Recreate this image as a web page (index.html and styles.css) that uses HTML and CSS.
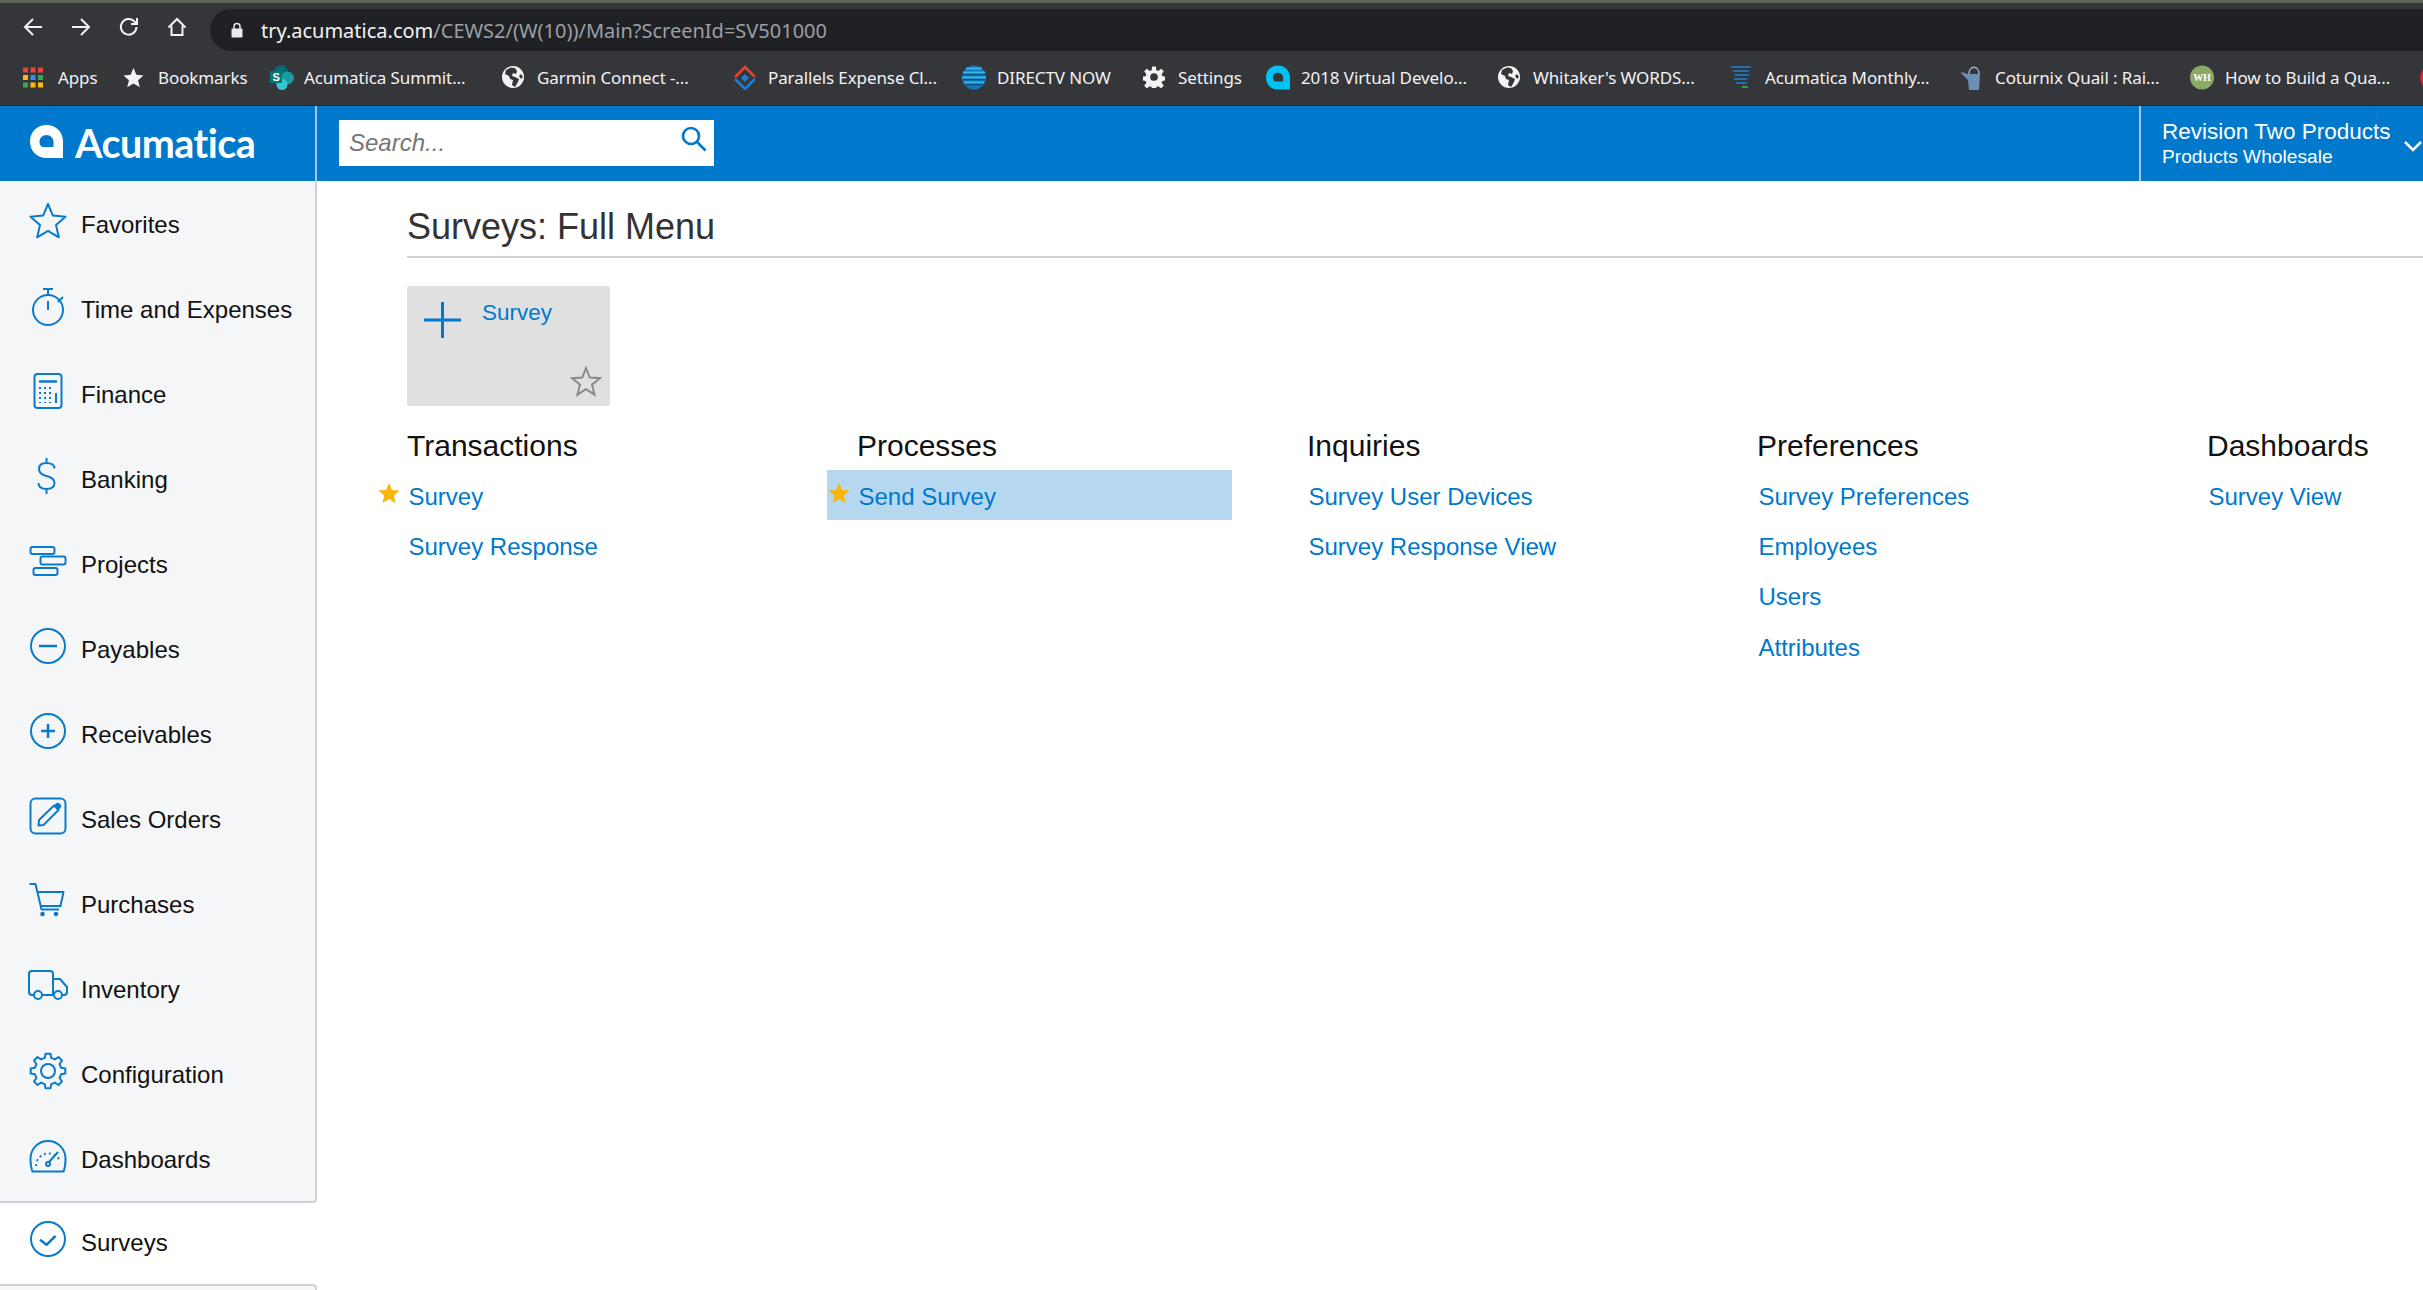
FILE: index.html
```html
<!DOCTYPE html>
<html lang="en">
<head>
<meta charset="utf-8">
<title>Surveys: Full Menu</title>
<link rel="stylesheet" href="styles.css">
</head>
<body>
<div class="window-strip"></div>
<div class="toolbar">
  <div class="nav-buttons">
    <svg class="tool" viewBox="0 0 20 20"><path d="M19 10H2M10 2l-8 8 8 8"/></svg>
    <svg class="tool" viewBox="0 0 20 20"><path d="M1 10h17M10 2l8 8-8 8"/></svg>
    <svg class="tool" viewBox="0 0 20 20"><path d="M17.500 10a7.800 7.800 0 1 1-2.400-5.800L18 7M18 1v6h-6"/></svg>
    <svg class="tool" viewBox="0 0 20 20"><path d="M1.500 10.500 10 2l8.500 8.500M4.500 9v9h11V9"/></svg>
  </div>
  <div class="omnibox">
    <svg class="lock" viewBox="0 0 12 16"><path d="M3 7V4.500a3 3 0 0 1 6 0V7" class="lock-bow"/><rect x="0.500" y="6.500" width="11" height="9" rx="1"/></svg>
    <span class="url"><span class="url-host">try.acumatica.com</span>/CEWS2/(W(10))/Main?ScreenId=SV501000</span>
  </div>
</div>
<div class="bookmarks">
  <div class="bm"><span class="bm-icon"><svg viewBox="0 0 20 20" width="20" height="21"><rect width="5" height="5" fill="#e8453c"/><rect x="7.500" width="5" height="5" fill="#e8453c"/><rect x="15" width="5" height="5" fill="#e8453c"/><rect y="7.500" width="5" height="5" fill="#fbbc05"/><rect x="7.500" y="7.500" width="5" height="5" fill="#4285f4"/><rect x="15" y="7.500" width="5" height="5" fill="#34a853"/><rect y="15" width="5" height="5" fill="#34a853"/><rect x="7.500" y="15" width="5" height="5" fill="#fbbc05"/><rect x="15" y="15" width="5" height="5" fill="#fbbc05"/></svg></span>Apps</div>
  <div class="bm"><span class="bm-icon"><svg viewBox="0 0 22 22" width="21" height="21"><path fill="#f1f3f4" d="m11 1 3 7.200 7.500.6-5.700 5 1.800 7.500L11 17.300l-6.600 4 1.800-7.500-5.700-5L8 8.200z"/></svg></span>Bookmarks</div>
  <div class="bm"><span class="bm-icon"><svg viewBox="0 0 25 25" width="25" height="25"><circle cx="12" cy="7" r="7" fill="#036c70"/><circle cx="18.500" cy="13" r="6.500" fill="#1a9ba1"/><circle cx="13" cy="19.500" r="5.500" fill="#37c6d0"/><rect x="1" y="6" width="12" height="12" rx="1" fill="#03787c"/><text x="7" y="15.500" class="sp-s">S</text></svg></span>Acumatica Summit...</div>
  <div class="bm"><span class="bm-icon"><svg viewBox="0 0 22 22" width="22" height="22"><circle cx="11" cy="11" r="11" fill="#f1f3f4"/><path fill="#35363a" d="M9 1.500 4 4 3 8l4 2 1 3 3 1-1 5 3 2 3-5 1-3-4-2-3-1 1-3 3 1 1-3-2-3zM19 8l-2 2 2 3 2-2z"/></svg></span>Garmin Connect -...</div>
  <div class="bm"><span class="bm-icon"><svg viewBox="0 0 24 25" width="24" height="25"><path fill="none" stroke="#e8432e" stroke-width="2.500" d="M2 12 12 2l10 10"/><path fill="none" stroke="#1c7ed6" stroke-width="2.500" d="m2 14 10 10 10-10"/><path fill="#1c7ed6" d="m12 9 4 4-4 4-4-4z"/></svg></span>Parallels Expense Cl...</div>
  <div class="bm"><span class="bm-icon"><svg viewBox="0 0 24 24" width="24" height="25"><circle cx="12" cy="12" r="12" fill="#1378b8"/><path stroke="#0a4f80" stroke-width="1.500" d="M0 9h24M1 14h22M3 19h18"/><path stroke="#35b3ee" stroke-width="1.800" d="M4 3h16M1 7h22M0 12h24M2 17h20"/></svg></span>DIRECTV NOW</div>
  <div class="bm"><span class="bm-icon"><svg viewBox="0 0 40 40" width="22" height="22"><path fill="#f1f3f4" fill-rule="evenodd" d="M16.700 1h6.600l1 6.500 3.300 1.400 5.500-3.900 4.700 4.700-3.900 5.500 1.400 3.300 6.500 1v6.600l-6.500 1-1.400 3.300 3.900 5.500-4.700 4.700-5.500-3.900-3.300 1.400-1 6.500h-6.600l-1-6.500-3.300-1.400-5.500 3.900-4.700-4.700 3.900-5.500-1.400-3.300-6.500-1v-6.600l6.500-1 1.400-3.300-3.900-5.500 4.700-4.700 5.500 3.900 3.300-1.400zM20 13a7 7 0 1 0 0 14 7 7 0 0 0 0-14z"/></svg></span>Settings</div>
  <div class="bm"><span class="bm-icon"><svg viewBox="0 0 33 33" width="24" height="25"><path fill="#00c2f3" fill-rule="evenodd" d="M16.500 0C26 0 33 7 33 16.500V33H16.500C7 33 0 26 0 16.500S7 0 16.500 0zm0 10c-4 0-7 3-7 7 0 3 2 5 4 5h10v-5c0-4-3-7-7-7z"/></svg></span>2018 Virtual Develo...</div>
  <div class="bm"><span class="bm-icon"><svg viewBox="0 0 22 22" width="22" height="22"><circle cx="11" cy="11" r="11" fill="#f1f3f4"/><path fill="#35363a" d="M9 1.500 4 4 3 8l4 2 1 3 3 1-1 5 3 2 3-5 1-3-4-2-3-1 1-3 3 1 1-3-2-3zM19 8l-2 2 2 3 2-2z"/></svg></span>Whitaker's WORDS...</div>
  <div class="bm"><span class="bm-icon"><svg viewBox="0 0 21 24" width="21" height="24"><path stroke="#1f6fb2" stroke-width="2" d="M1 2h20M3 6h16M5 10h14M4 14h13M6 18h11"/><path stroke="#2f9e44" stroke-width="2" d="M12 22h6"/></svg></span>Acumatica Monthly...</div>
  <div class="bm"><span class="bm-icon"><svg viewBox="0 0 22 25" width="22" height="25"><path fill="#6d8fb5" d="M7 9h13l-1 16H9L8 15 1 8l1-1z"/><path fill="none" stroke="#9db3c9" stroke-width="1.500" d="M9 9c0-9 10-9 10 0"/></svg></span>Coturnix Quail : Rai...</div>
  <div class="bm"><span class="bm-icon"><svg viewBox="0 0 24 24" width="24" height="25"><circle cx="12" cy="12" r="12" fill="#8bab64"/><text x="12" y="15.500" class="wh">WH</text></svg></span>How to Build a Qua...</div>
  <div class="bm bm-clipped"><span class="bm-icon"><svg viewBox="0 0 24 24" width="24" height="25"><circle cx="12" cy="12" r="12" fill="#d9233b"/></svg></span></div>
</div>
<header class="app-header">
  <div class="logo">
    <svg class="logo-mark" viewBox="0 0 33 33"><path fill="#fff" fill-rule="evenodd" d="M16.500 0C26 0 33 7 33 16.500V33H16.500C7 33 0 26 0 16.500S7 0 16.500 0zm0 10c-4 0-7 3-7 7 0 3 2 5 4 5h10v-5c0-4-3-7-7-7z"/></svg>
    <span class="logo-text">Acumatica</span>
  </div>
  <div class="search">
    <span class="search-text">Search...</span>
    <svg class="search-icon" viewBox="0 0 26 26"><circle cx="10" cy="10" r="8"/><path d="m15.500 15.500 9 9"/></svg>
  </div>
  <div class="company">
    <div class="company-name">Revision Two Products</div>
    <div class="company-sub">Products Wholesale</div>
    <svg class="chevron" viewBox="0 0 20 12"><path d="m2 2 8 8 8-8"/></svg>
  </div>
</header>
<div class="app-body">
  <nav class="sidebar">
    <div class="nav-group">
      <a class="nav-row"><svg class="nav-icon" viewBox="0 0 40 40"><path d="m20 3 4.900 11.600 12.600 1.100-9.500 8.300 2.800 12.300-10.800-6.500-10.800 6.500L12 24l-9.500-8.300 12.600-1.100z"/></svg>Favorites</a>
      <a class="nav-row"><svg class="nav-icon" viewBox="0 0 40 40"><circle cx="20" cy="24" r="15"/><path d="M15 3h10M20 3v6M20 15v9M30 16l5-5"/></svg>Time and Expenses</a>
      <a class="nav-row"><svg class="nav-icon" viewBox="0 0 40 40"><rect x="6.500" y="3" width="27" height="34" rx="3"/><path d="M11 10.500h18" stroke-width="2.500"/><path class="dots" d="M12 16v16M17 16v16M22 16v16"/><path d="M28 22v10"/></svg>Finance</a>
      <a class="nav-row"><svg class="nav-icon" viewBox="0 0 40 40"><path d="M26.500 12.500C26.500 9 23 7 18.500 7S11 9 11 13s3.500 6 7.500 7c4.500 1.100 8 3 8 7s-3.500 6-8 6-8-2-8-6M18.500 2v5M18.500 33v5"/></svg>Banking</a>
      <a class="nav-row"><svg class="nav-icon" viewBox="0 0 40 40"><rect x="2.500" y="6" width="24" height="7" rx="2"/><rect x="12.500" y="15.500" width="25" height="8" rx="2"/><rect x="5.500" y="27" width="24" height="7" rx="2"/></svg>Projects</a>
      <a class="nav-row"><svg class="nav-icon" viewBox="0 0 40 40"><circle cx="20" cy="20" r="17"/><path d="M11 20h18" stroke-width="2.500"/></svg>Payables</a>
      <a class="nav-row"><svg class="nav-icon" viewBox="0 0 40 40"><circle cx="20" cy="20" r="17"/><path d="M13 20h14M20 13v14" stroke-width="2.500"/></svg>Receivables</a>
      <a class="nav-row"><svg class="nav-icon" viewBox="0 0 40 40"><rect x="2.500" y="2.500" width="35" height="35" rx="5"/><path d="M10.500 29.500 11 24 26 9.500l4.500 4.500L15.500 29z"/><path class="solid" d="m26 9.500 2-2a2.500 2.500 0 0 1 3.500 0l1 1a2.500 2.500 0 0 1 0 3.500l-2 2z"/></svg>Sales Orders</a>
      <a class="nav-row"><svg class="nav-icon" viewBox="0 0 40 40"><path d="M1.500 3H7.500l6 25.500H31M9 11h26.500l-3 14H13"/><circle class="solid" cx="14.500" cy="33" r="2.300"/><circle class="solid" cx="28" cy="33" r="2.300"/></svg>Purchases</a>
      <a class="nav-row"><svg class="nav-icon" viewBox="0 0 40 40"><path d="M6 29H4a3 3 0 0 1-3-3V8a3 3 0 0 1 3-3h18a3 3 0 0 1 3 3v21M14 29h12M25 13h7l7 8v5a3 3 0 0 1-3 3h-2"/><circle cx="10" cy="29" r="4"/><circle cx="30" cy="29" r="4"/></svg>Inventory</a>
      <a class="nav-row"><svg class="nav-icon" viewBox="0 0 40 40"><path d="M16.730 6.900 17.560 2.670H22.440L23.270 6.900 26.950 8.430 30.530 6.020 33.980 9.470 31.570 13.050 33.100 16.730 37.330 17.560V22.440L33.100 23.270 31.570 26.950 33.980 30.530 30.530 33.980 26.950 31.570 23.270 33.100 22.440 37.330H17.560L16.730 33.100 13.050 31.570 9.470 33.980 6.020 30.530 8.430 26.950 6.900 23.270 2.670 22.440V17.560L6.900 16.730 8.430 13.050 6.020 9.470 9.470 6.020 13.050 8.430z"/><circle cx="20" cy="20" r="7"/></svg>Configuration</a>
      <a class="nav-row"><svg class="nav-icon" viewBox="0 0 40 40"><path d="M4.500 35.500C3 32 2.500 27 2.500 22.500a17.500 17.500 0 0 1 35 0c0 4.500-.5 9.500-2 13z"/><path d="M21 26 30 16"/><circle cx="20" cy="28" r="2"/><path class="dots" d="M8 30a12.500 12.500 0 0 1 24-5"/></svg>Dashboards</a>
    </div>
    <a class="nav-row nav-row-active"><svg class="nav-icon" viewBox="0 0 40 40"><circle cx="20" cy="20" r="17"/><path d="m12 20.800 6.500 5 9-9" stroke-width="2.500"/></svg>Surveys</a>
    <div class="nav-group nav-group-rest"></div>
  </nav>
  <main class="content">
    <h1 class="page-title">Surveys: Full Menu</h1>
    <div class="tile">
      <svg class="tile-plus" viewBox="0 0 37 36"><path d="M0 18h37M18.500 0v36"/></svg>
      <a class="tile-link">Survey</a>
      <svg class="tile-star" viewBox="0 0 32 31"><path d="m16 2 3.700 9.500 10.300.7-8 6.500 2.600 10-8.600-5.500-8.600 5.500 2.600-10-8-6.500 10.300-.7z"/></svg>
    </div>
    <div class="columns">
      <section class="column">
        <h2 class="column-title">Transactions</h2>
        <div class="item"><svg class="fav" viewBox="0 0 22 20"><path d="m11 0 3 7 7.500.6-5.700 4.900 1.800 7.500-6.600-4-6.600 4 1.800-7.500L.5 7.600 8 7z"/></svg><a>Survey</a></div>
        <div class="item"><a>Survey Response</a></div>
      </section>
      <section class="column">
        <h2 class="column-title">Processes</h2>
        <div class="item item-active"><svg class="fav" viewBox="0 0 22 20"><path d="m11 0 3 7 7.500.6-5.700 4.900 1.800 7.500-6.600-4-6.600 4 1.800-7.500L.5 7.600 8 7z"/></svg><a>Send Survey</a></div>
      </section>
      <section class="column">
        <h2 class="column-title">Inquiries</h2>
        <div class="item"><a>Survey User Devices</a></div>
        <div class="item"><a>Survey Response View</a></div>
      </section>
      <section class="column">
        <h2 class="column-title">Preferences</h2>
        <div class="item"><a>Survey Preferences</a></div>
        <div class="item"><a>Employees</a></div>
        <div class="item"><a>Users</a></div>
        <div class="item"><a>Attributes</a></div>
      </section>
      <section class="column">
        <h2 class="column-title">Dashboards</h2>
        <div class="item"><a>Survey View</a></div>
      </section>
    </div>
  </main>
</div>
</body>
</html>
```
FILE: styles.css
```css
* { box-sizing: border-box; }
html, body { height: 100%; }
body {
  margin: 0;
  display: flex;
  flex-direction: column;
  overflow: hidden;
  background: #fff;
  font-family: "Liberation Sans", Arial, sans-serif;
}
.window-strip { height: 3px; flex: none; background: #5b6456; }
.toolbar {
  flex: none;
  height: 48px;
  padding-top: 6px;
  display: flex;
  background: #35363a;
}
.nav-buttons {
  width: 210px;
  padding: 5px 0 0 23px;
  display: flex;
  gap: 28px;
}
.tool {
  width: 20px;
  height: 20px;
  margin-top: 3px;
  fill: none;
  stroke: #f1f3f4;
  stroke-width: 2;
}
.omnibox {
  flex: 1;
  height: 42px;
  padding-left: 21px;
  display: flex;
  align-items: center;
  background: #202124;
  border-radius: 21px 0 0 21px;
}
.lock { width: 12px; height: 16px; fill: #e8eaed; }
.lock-bow { fill: none; stroke: #e8eaed; stroke-width: 1.5; }
.url {
  margin-left: 18px;
  color: #9aa0a6;
  font: 20px "Noto Sans", sans-serif;
  white-space: nowrap;
}
.url-host { color: #f1f3f4; }
.bookmarks {
  flex: none;
  height: 55px;
  padding: 0 0 2px 23px;
  display: grid;
  grid-template-columns: 100px 146px 233px 231px 229px 181px 123px 232px 232px 230px 230px 230px 3px;
  align-items: center;
  background: #35363a;
  border-bottom: 1px solid #1d2a36;
  overflow: hidden;
  color: #f1f3f4;
  font: 17px "Noto Sans", sans-serif;
  letter-spacing: -0.1px;
}
.bm { display: flex; align-items: center; white-space: nowrap; }
.bm-clipped { overflow: hidden; }
.bm-icon { flex: none; width: 35px; height: 25px; display: flex; align-items: center; }
.sp-s { fill: #fff; font: bold 11px "Liberation Sans", sans-serif; text-anchor: middle; }
.wh { fill: #fff; font: bold 10px "Liberation Serif", serif; text-anchor: middle; }
.app-header {
  flex: none;
  height: 75px;
  display: flex;
  background: #0078cc;
  color: #fff;
}
.logo {
  width: 317px;
  padding: 19px 0 0 30px;
  display: flex;
  gap: 12px;
  align-items: flex-start;
  border-right: 2px solid #9ec9e8;
}
.logo-mark { width: 33px; height: 33px; }
.logo-text { margin-top: -6px; font: bold 39.500px Lato, sans-serif; letter-spacing: -0.5px; }
.search {
  width: 375px;
  height: 46px;
  margin: 14px 0 0 22px;
  padding: 0 7px 0 10px;
  display: flex;
  align-items: center;
  justify-content: space-between;
  background: #fff;
}
.search-text { color: #757575; font-size: 24px; font-style: italic; }
.search-icon { width: 26px; height: 26px; margin-top: -8px; fill: none; stroke: #0078cc; stroke-width: 2.6; }
.company {
  position: relative;
  width: 284px;
  margin-left: auto;
  padding: 12px 0 0 21px;
  border-left: 2px solid #9ec9e8;
  overflow: hidden;
  white-space: nowrap;
}
.company-name { font-size: 22.500px; line-height: 28px; }
.company-sub { font-size: 19.200px; line-height: 22px; }
.chevron {
  position: absolute;
  top: 34px;
  left: 262px;
  width: 20px;
  height: 12px;
  fill: none;
  stroke: #fff;
  stroke-width: 2.5;
}
.app-body { flex: 1; min-height: 0; display: flex; }
.sidebar { flex: none; width: 317px; display: flex; flex-direction: column; }
.nav-group {
  background: #f5f6f8;
  border-right: 2px solid #d0d0d8;
  border-bottom: 2px solid #d0d0d8;
  border-bottom-right-radius: 4px;
}
.nav-group-rest {
  flex: 1;
  border-top: 2px solid #d0d0d8;
  border-bottom: 0;
  border-radius: 0 4px 0 0;
}
.nav-row {
  height: 85px;
  padding: 2px 0 0 27.5px;
  display: flex;
  align-items: center;
  gap: 13.5px;
  color: #111;
  font-size: 24px;
}
.nav-row-active { height: 81px; padding: 0 0 2px 27.5px; }
.nav-icon {
  flex: none;
  width: 40px;
  height: 40px;
  margin-top: -8px;
  overflow: visible;
  fill: none;
  stroke: #0a7acb;
  stroke-width: 2;
  stroke-linejoin: round;
}
.nav-icon .solid { fill: #0a7acb; stroke: none; }
.nav-icon .dots { stroke-dasharray: 2 3; }
.content { flex: 1; min-width: 0; }
.page-title {
  margin: 0 0 28px 90px;
  height: 77px;
  padding-top: 26px;
  border-bottom: 2px solid #d2d2da;
  color: #333;
  font-size: 36px;
  font-weight: 400;
  line-height: 40px;
}
.tile {
  position: relative;
  width: 203px;
  height: 120px;
  margin-left: 90px;
  padding: 16px 0 0 75px;
  background: #e0e0e0;
  border-radius: 2px;
}
.tile-plus {
  position: absolute;
  top: 16px;
  left: 17px;
  width: 37px;
  height: 36px;
  fill: none;
  stroke: #0078cc;
  stroke-width: 3;
}
.tile-link { color: #0078cc; font-size: 22.500px; line-height: 22px; }
.tile-star {
  position: absolute;
  right: 8px;
  bottom: 9px;
  width: 32px;
  height: 31px;
  fill: none;
  stroke: #8a8a8a;
  stroke-width: 2;
}
.columns { margin-left: 60px; display: grid; grid-template-columns: repeat(4, 450px) 1fr; }
.column { min-width: 0; }
.column-title {
  margin: 22px 0 6px 30px;
  height: 36px;
  color: #111;
  font-size: 30px;
  font-weight: 400;
  line-height: 36px;
  white-space: nowrap;
}
.item {
  position: relative;
  max-width: 100%;
  width: 405px;
  height: 50.300px;
  padding: 3px 0 0 31.5px;
  display: flex;
  align-items: center;
  color: #0078cc;
  font-size: 24px;
  white-space: nowrap;
}
.item-active { background: #b5d7f0; }
.fav {
  position: absolute;
  top: 13px;
  left: 1px;
  width: 22px;
  height: 20px;
  fill: #f9b60a;
}
```
